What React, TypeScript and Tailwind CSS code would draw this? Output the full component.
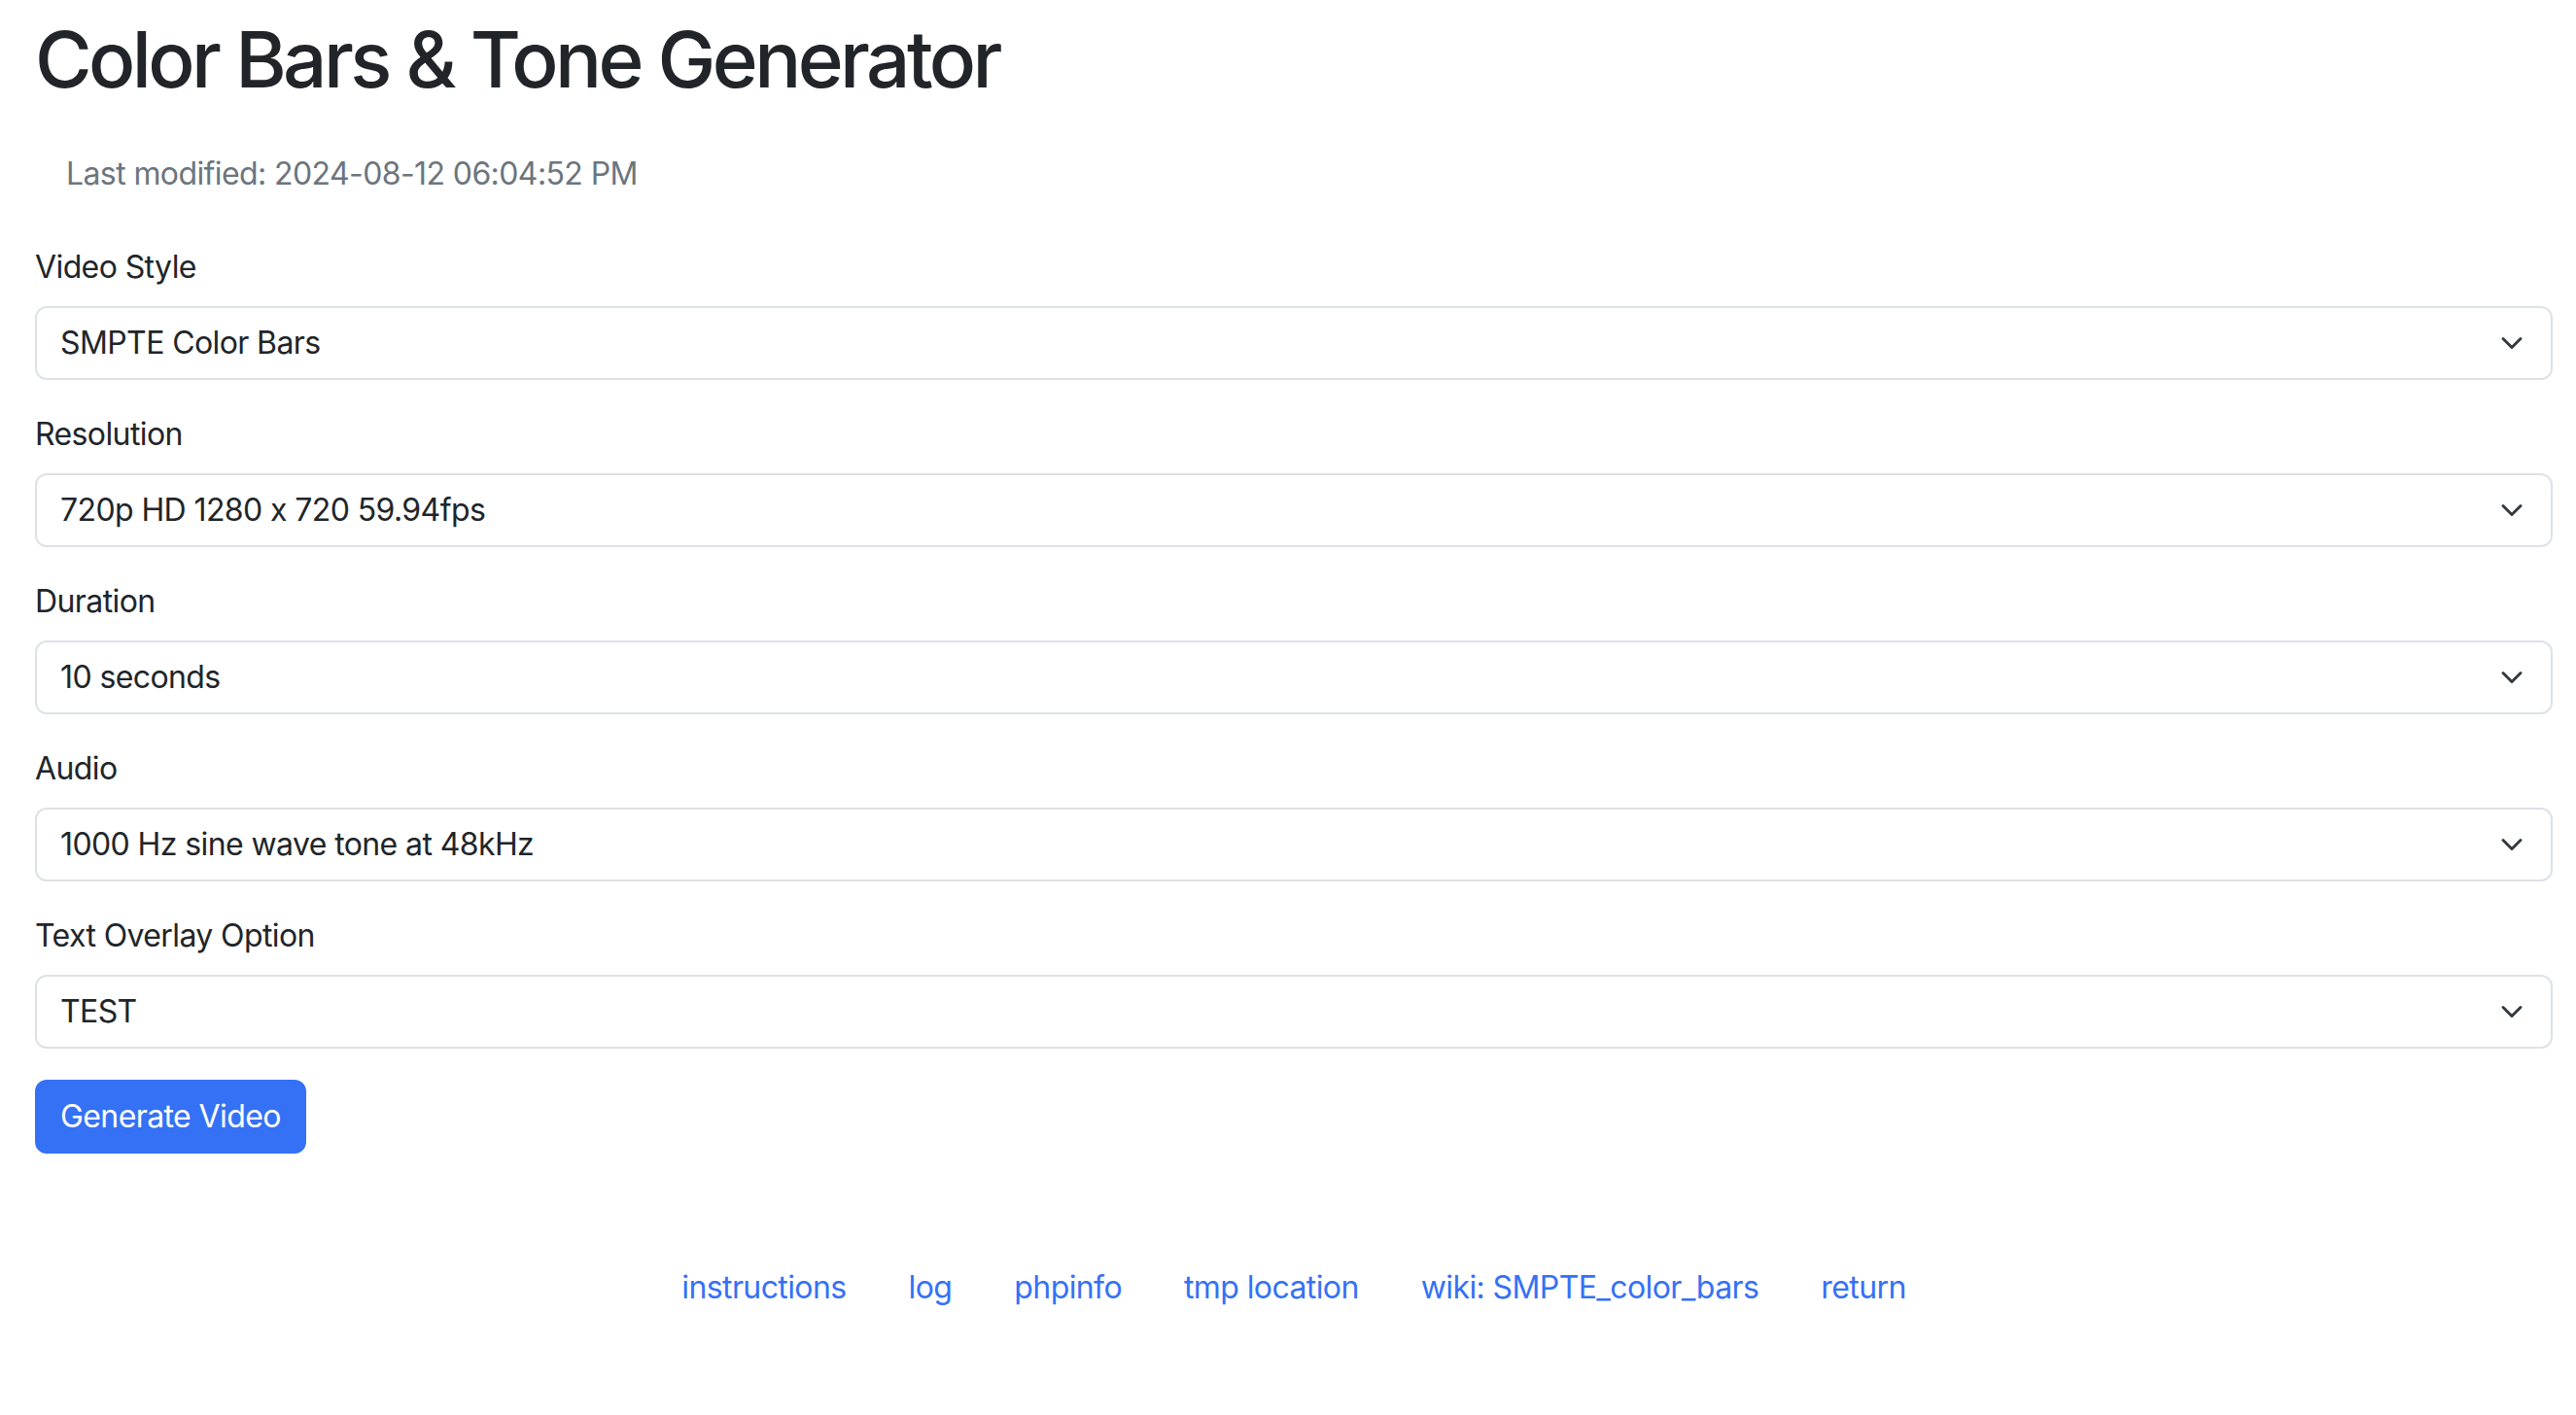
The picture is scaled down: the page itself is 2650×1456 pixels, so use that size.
import React from "react";

const fields = [
  { label: "Video Style", value: "SMPTE Color Bars" },
  { label: "Resolution", value: "720p HD 1280 x 720 59.94fps" },
  { label: "Duration", value: "10 seconds" },
  { label: "Audio", value: "1000 Hz sine wave tone at 48kHz" },
  { label: "Text Overlay Option", value: "TEST" },
];

const links = ["instructions", "log", "phpinfo", "tmp location", "wiki: SMPTE_color_bars", "return"];

function Chevron() {
  return (
    <svg width="24" height="24" viewBox="0 0 16 16" fill="none" className="shrink-0">
      <path d="m2 5 6 6 6-6" stroke="#343a40" strokeWidth="2" strokeLinecap="round" strokeLinejoin="round" />
    </svg>
  );
}

export default function App() {
  return (
    <div
      className="min-h-[1456px] bg-white pl-[36px] pr-[24px] text-[#212529] [font-feature-settings:'calt'_0] tracking-[-0.6px]"
      style={{ fontFamily: "Inter, 'Noto Sans', sans-serif" }}
    >
      <h1 className="pt-[13px] text-[80px] leading-[96px] font-medium tracking-[-3.6px]">
        Color Bars &amp; Tone Generator
      </h1>
      <p className="mt-[46px] pl-[32px] text-[32px] leading-[48px] text-[#6c757d]">
        Last modified: 2024-08-12 06:04:52 PM
      </p>
      <form className="mt-[48px] flex flex-col">
        {fields.map((f) => (
          <div key={f.label} className="mb-[32px] flex flex-col">
            <label className="mb-[16px] text-[32px] leading-[48px]">{f.label}</label>
            <div className="flex h-[76px] items-center justify-between rounded-[12px] border-2 border-[#dee2e6] bg-white pl-[24px] pr-[28px] text-[32px] leading-[48px]">
              <span>{f.value}</span>
              <Chevron />
            </div>
          </div>
        ))}
        <div>
          <button
            type="button"
            className="h-[76px] rounded-[12px] border-2 border-[#3571f5] bg-[#3571f5] px-[24px] text-[32px] leading-[48px] text-white"
          >
            Generate Video
          </button>
        </div>
      </form>
      <nav className="mt-[114px] flex justify-center gap-[64px] text-[32px] leading-[48px]">
        {links.map((l) => (
          <a key={l} href="#" className="text-[#3571f5]">
            {l}
          </a>
        ))}
      </nav>
    </div>
  );
}
